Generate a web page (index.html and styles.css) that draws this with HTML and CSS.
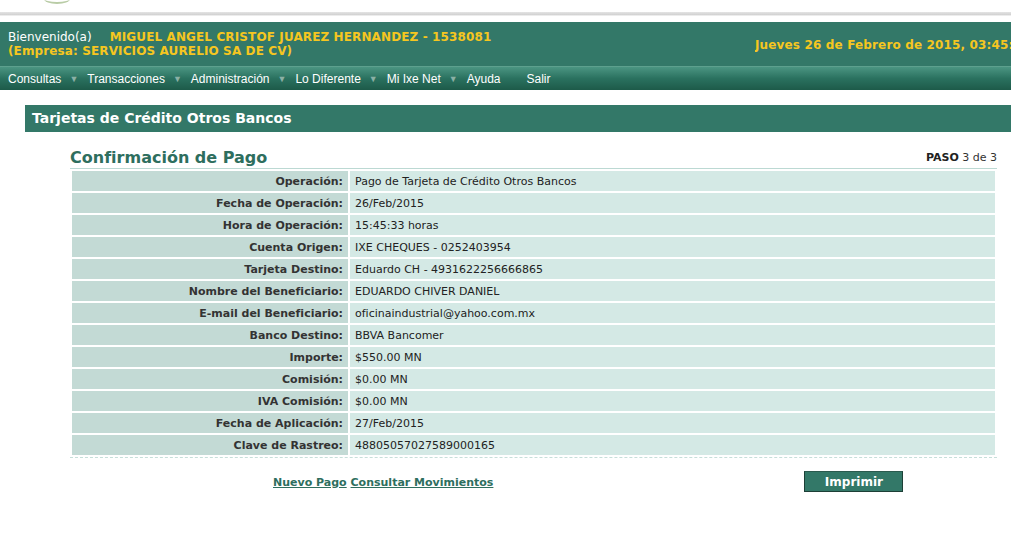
FILE: index.html
```html
<!DOCTYPE html>
<html lang="es">
<head>
<meta charset="utf-8">
<title>Confirmación de Pago</title>
<link rel="stylesheet" href="styles.css">
</head>
<body>
<div class="topstrip">
  <div class="logo-sliver"></div>
</div>
<div class="topline"></div>
<header class="header">
  <div class="welcome">
    <div class="line1"><span class="hello">Bienvenido(a)</span><span class="yellow name">MIGUEL ANGEL CRISTOF JUAREZ HERNANDEZ - 1538081</span></div>
    <div class="line2 yellow">(Empresa: SERVICIOS AURELIO SA DE CV)</div>
  </div>
  <div class="date yellow">Jueves 26 de Febrero de 2015, 03:45:33 p.m.</div>
</header>
<nav class="menu">
  <span class="item">Consultas<span class="arrow">▼</span></span>
  <span class="item">Transacciones<span class="arrow">▼</span></span>
  <span class="item">Administración<span class="arrow">▼</span></span>
  <span class="item">Lo Diferente<span class="arrow">▼</span></span>
  <span class="item">Mi Ixe Net<span class="arrow">▼</span></span>
  <span class="item">Ayuda</span>
  <span class="item salir">Salir</span>
</nav>
<main class="content">
  <div class="titlebar">Tarjetas de Crédito Otros Bancos</div>
  <section class="panel">
    <div class="panel-head">
      <h2>Confirmación de Pago</h2>
      <div class="paso"><b>PASO</b> 3 de 3</div>
    </div>
    <table class="data">
      <tr><th>Operación:</th><td>Pago de Tarjeta de Crédito Otros Bancos</td></tr>
      <tr><th>Fecha de Operación:</th><td>26/Feb/2015</td></tr>
      <tr><th>Hora de Operación:</th><td>15:45:33 horas</td></tr>
      <tr><th>Cuenta Origen:</th><td>IXE CHEQUES - 0252403954</td></tr>
      <tr><th>Tarjeta Destino:</th><td>Eduardo CH - 4931622256666865</td></tr>
      <tr><th>Nombre del Beneficiario:</th><td>EDUARDO CHIVER DANIEL</td></tr>
      <tr><th>E-mail del Beneficiario:</th><td>oficinaindustrial@yahoo.com.mx</td></tr>
      <tr><th>Banco Destino:</th><td>BBVA Bancomer</td></tr>
      <tr><th>Importe:</th><td>$550.00 MN</td></tr>
      <tr><th>Comisión:</th><td>$0.00 MN</td></tr>
      <tr><th>IVA Comisión:</th><td>$0.00 MN</td></tr>
      <tr><th>Fecha de Aplicación:</th><td>27/Feb/2015</td></tr>
      <tr><th>Clave de Rastreo:</th><td>48805057027589000165</td></tr>
    </table>
    <div class="actions">
      <div class="links"><a href="#">Nuevo Pago</a> <a href="#">Consultar Movimientos</a></div>
      <button class="btn" type="button">Imprimir</button>
    </div>
  </section>
</main>
</body>
</html>
```

FILE: styles.css
```css
html, body {
  margin: 0;
  padding: 0;
  background: #fff;
}
body {
  font-family: "DejaVu Sans", Verdana, sans-serif;
  width: 1011px;
  overflow: hidden;
}
.topstrip {
  height: 12px;
  position: relative;
}
.logo-sliver {
  position: absolute;
  left: 44px;
  top: -6px;
  width: 26px;
  height: 8px;
  border-radius: 50%;
  border-bottom: 2px solid #b9cca6;
}
.topline {
  height: 3px;
  background: linear-gradient(#e4e4e4, #d0d0d0);
  border-bottom: 1px solid #ececec;
  margin-bottom: 6px;
}
.header {
  background: #337868;
  height: 44px;
  display: flex;
  align-items: flex-start;
  overflow: hidden;
}
.welcome {
  padding: 8px 0 0 8px;
  font-size: 12px;
  line-height: 14px;
  flex: 1;
}
.hello {
  color: #fff;
  margin-right: 18px;
}
.yellow {
  color: #f6c620;
  font-weight: bold;
  letter-spacing: 0.12px;
}
.date {
  width: 256px;
  flex: none;
  white-space: nowrap;
  overflow: hidden;
  font-size: 12px;
  padding-top: 16px;
  letter-spacing: 0.15px;
}
.menu {
  height: 23px;
  background: linear-gradient(#4b9582, #2a715f 50%, #1d5a49);
  display: flex;
  align-items: center;
  padding-left: 8px;
  font-family: "Liberation Sans", Arial, sans-serif;
  font-size: 12px;
  color: #fff;
  border-top: 1px solid #5da08e;
}
.item {
  display: flex;
  align-items: center;
  margin-right: 9px;
}
.arrow {
  font-size: 9px;
  color: #8ab0a5;
  margin-left: 8px;
}
.item.salir {
  margin-left: 17px;
}
.content {
  padding: 15px 0 0 25px;
}
.titlebar {
  background: #337868;
  color: #fff;
  font-weight: bold;
  font-size: 14px;
  height: 27px;
  line-height: 27px;
  padding-left: 7px;
}
.panel {
  margin: 15px 14px 0 45px;
}
.panel-head {
  display: flex;
  justify-content: space-between;
  align-items: flex-end;
  border-bottom: 1px solid #bcd9d3;
  padding-bottom: 0;
}
.panel-head h2 {
  margin: 0;
  font-size: 16px;
  color: #2e6e5e;
  line-height: 21px;
}
.paso {
  font-size: 11px;
  color: #333;
  padding-bottom: 4px;
}
.paso b {
  color: #222;
}
.data {
  width: 100%;
  border-collapse: separate;
  border-spacing: 2px;
  font-size: 11px;
  color: #222;
}
.data th, .data td {
  height: 20px;
  padding: 0 5px;
  vertical-align: middle;
}
.data th {
  width: 266px;
  text-align: right;
  background: #c3dad5;
  color: #333;
}
.data td {
  background: #d4e9e5;
}
.actions {
  border-top: 1px dashed #c7dfda;
  margin-top: 0;
  display: flex;
  align-items: flex-start;
  padding-top: 13px;
}
.links {
  margin-left: 203px;
  padding-top: 5px;
  font-size: 11px;
  font-weight: bold;
}
.links a {
  color: #2e6e5e;
}
.btn {
  margin-left: 311px;
  width: 99px;
  height: 21px;
  background: #337868;
  border: 1px solid #1d3f36;
  border-top-color: #2a5a4e;
  color: #fff;
  font-family: "DejaVu Sans", Verdana, sans-serif;
  font-weight: bold;
  font-size: 12px;
  padding: 0;
}
```
